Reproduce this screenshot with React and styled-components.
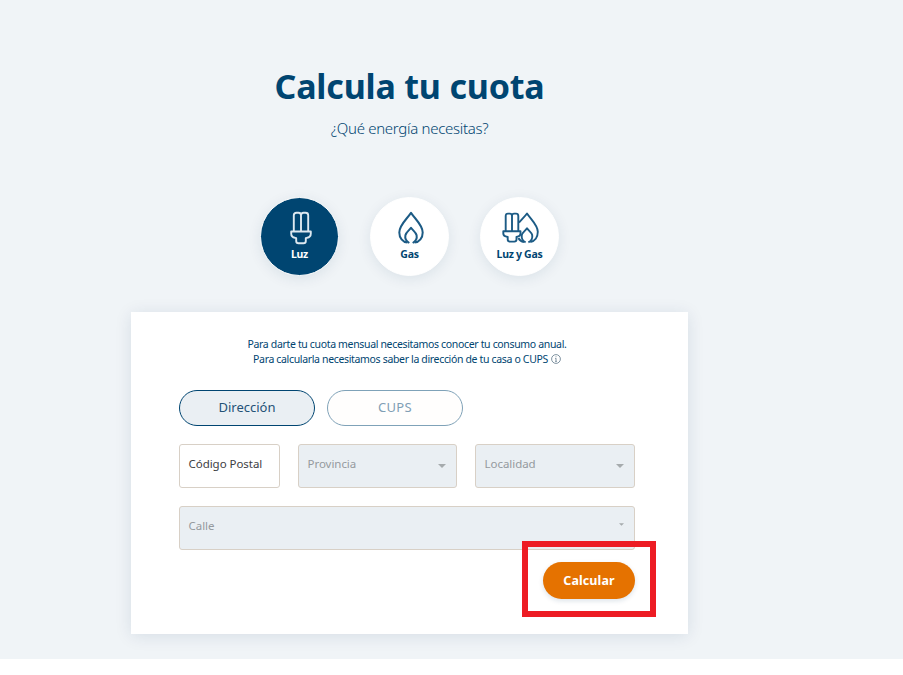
import React from "react";
import styled, { createGlobalStyle } from "styled-components";

const GlobalStyle = createGlobalStyle`
  * { box-sizing: border-box; }
  body { margin: 0; background: #fff; font-family: "Noto Sans", "Open Sans", sans-serif; color: #004571; }
  button, input { font-family: inherit; }
`;

const Page = styled.main`
  height: 659px;
  padding-top: 64px;
  background: #f0f4f7;
`;

const Calculator = styled.section`
  width: 558px;
  margin-left: 130.5px;
  display: flex;
  flex-direction: column;
  align-items: center;
`;

const Title = styled.h1`
  margin: 0;
  height: 45px;
  font-size: 34px;
  line-height: 45px;
  font-weight: 700;
  letter-spacing: -0.2px;
  white-space: nowrap;
`;

const Subtitle = styled.p`
  margin: 8px 0 0;
  height: 22px;
  font-size: 15px;
  line-height: 22px;
  font-weight: 300;
  letter-spacing: -0.3px;
  white-space: nowrap;
`;

const EnergyOptions = styled.div`
  display: flex;
  gap: 31px;
  margin-top: 58px;
`;

const EnergyOption = styled.button`
  width: 79px;
  height: 79px;
  padding: 13px 0 0;
  display: flex;
  flex-direction: column;
  align-items: center;
  border: 1px solid #fff;
  border-radius: 50%;
  background: ${(p) => (p.$active ? "#004571" : "#fff")};
  color: ${(p) => (p.$active ? "#fff" : "#004571")};
  box-shadow: 0 3px 14px rgba(0, 50, 90, 0.09);
  svg { display: block; flex: none; transform: translateX(1px); stroke: ${(p) => (p.$active ? "#dce8f0" : "#1c5b85")}; }
`;

const OptionLabel = styled.span`
  margin-top: 2px;
  font-size: 10.5px;
  line-height: 14px;
  font-weight: 700;
  white-space: nowrap;
  letter-spacing: -0.3px;
`;

const Card = styled.div`
  width: 557px;
  height: 322px;
  margin-top: 36px;
  padding: 25px 53px 0 48px;
  background: #fff;
  box-shadow: 0 2px 16px rgba(0, 50, 90, 0.11);
`;

const Explanation = styled.div`
  display: flex;
  flex-direction: column;
  align-items: center;
  width: 456px;
  height: 32px;
  font-size: 10.5px;
  line-height: 15px;
`;

const ExplanationLine = styled.span`
  display: flex;
  align-items: center;
  gap: 3px;
  height: 15px;
  white-space: nowrap;
  letter-spacing: -0.34px;
  svg { margin-top: -2px; }
`;

const Tabs = styled.div`
  display: flex;
  gap: 12px;
  margin-top: 21px;
`;

const Tab = styled.button`
  width: 136px;
  height: 36px;
  padding: 0 0 3px;
  border: 1px solid ${(p) => (p.$active ? "#004571" : "#7fa2b8")};
  border-radius: 18px;
  background: ${(p) => (p.$active ? "#eaeff3" : "#fffefd")};
  color: ${(p) => (p.$active ? "#245277" : "#7f9fb5")};
  font-size: 13px;
  letter-spacing: ${(p) => p.$spacing || "0"};
`;

const Fields = styled.div`
  display: grid;
  grid-template-columns: 101px 159px 160px;
  gap: 18px;
  margin-top: 18px;
`;

const Field = styled.button`
  grid-column: ${(p) => (p.$wide ? "1 / -1" : "auto")};
  height: 44px;
  padding: 0 10px 5px 8.5px;
  display: flex;
  align-items: center;
  justify-content: space-between;
  border: 1px solid #d8d0c6;
  border-radius: 3px;
  background: ${(p) => (p.$enabled ? "#fff" : "#eaeff3")};
  color: ${(p) => (p.$enabled ? "#3d4043" : "#959a9e")};
  font-size: 11.5px;
  white-space: nowrap;
  letter-spacing: -0.04px;
`;

const Caret = styled.svg`
  display: block;
  flex: none;
  fill: #a6abad;
  margin-top: ${(p) => (p.$small ? "-2px" : "4px")};
`;

const Actions = styled.div`
  position: relative;
  display: flex;
  justify-content: flex-end;
  margin-top: 12px;
`;

const Submit = styled.button`
  width: 92px;
  height: 37px;
  padding: 0;
  border: 0;
  border-radius: 19px;
  background: #e57200;
  color: #fff;
  font-size: 12.5px;
  font-weight: 700;
  letter-spacing: 0.1px;
  box-shadow: 0 2px 5px rgba(0, 60, 100, 0.14);
`;

const Highlight = styled.div`
  position: absolute;
  top: -21px;
  right: -21px;
  width: 134px;
  height: 76px;
  border: 6px solid #ed1c24;
  pointer-events: none;
`;

const BulbIcon = () => (
  <svg width="22" height="34" viewBox="0 0 22 34" fill="none" strokeWidth="1.9" strokeLinejoin="round">
    <path d="M3.8 20V4.2Q3.8 1.7 6.5 1.7H8.5Q11 1.7 11 4.2V20M11 4.2Q11 1.7 13.5 1.7H15.5Q18.2 1.7 18.2 4.2V20" />
    <path d="M1.2 20.5H20.8V22.5Q20.8 26.2 17 26.8L15.8 27.2V30Q15.8 32.3 13.5 32.3H8.5Q6.2 32.3 6.2 30V27.2L5 26.8Q1.2 26.2 1.2 22.5Z" />
  </svg>
);

const FlameIcon = () => (
  <svg width="28" height="34" viewBox="0 0 28 34" fill="none" strokeWidth="2" strokeLinejoin="round">
    <path d="M10.5 31.6C5.6 31 2.3 26.8 2.3 21.4C2.3 14.2 9.2 8.8 14 1.9C18.8 8.8 25.7 14.2 25.7 21.4C25.7 26.8 22.4 31 17.5 31.6" />
    <path d="M12.3 32C8.5 29.7 7.8 27.2 8.4 24.2C8.9 21.5 12 19.5 14 16.9C16 19.5 19.1 21.5 19.6 24.2C20.2 27.2 19.5 29.7 15.7 32" />
  </svg>
);

const DualIcon = () => (
  <svg width="38" height="34" viewBox="0 0 38 34" fill="none" strokeWidth="1.9" strokeLinejoin="round">
    <path d="M3.7 20V5Q3.7 2.6 6 2.6H7.8Q10 2.6 10 5V20M10 5Q10 2.6 12.2 2.6H14Q16.3 2.6 16.3 5V20" />
    <path d="M1.3 20.3H18.5V22.5Q18.5 25.2 15.5 25.6L14.5 26V28.5Q14.5 30.6 12.3 30.6H7.9Q5.7 30.6 5.7 28.5V26L4.5 25.6Q1.3 25.2 1.3 22.5Z" />
    <path d="M17 11.5C19.8 8.3 22.8 5.5 25 2.5C29.3 8.9 35.8 14 35.8 20.8C35.8 26.3 32.8 30.2 28.3 31M22 31Q18 30.2 16.4 27" />
    <path d="M23.6 31.3C19.8 29.4 19.3 26.9 19.8 24C20.3 21.5 23.2 19.8 25 17.3C26.8 19.8 29.7 21.5 30.2 24C30.7 26.9 30.2 29.4 26.4 31.3" />
  </svg>
);

const InfoIcon = () => (
  <svg width="10" height="10" viewBox="0 0 10 10" fill="none" stroke="#5f7789" strokeWidth="0.8">
    <circle cx="5" cy="5" r="4.4" />
    <path d="M5 4.2V7.5M5 2.3V3.2M4.2 4.4H5M4.2 7.4H5.8" />
  </svg>
);

const DropdownCaret = ({ small }) => (
  <Caret $small={small} width={small ? 5 : 8} height={small ? 3 : 4} viewBox="0 0 8 4">
    <path d="M0 0H8L4 4Z" />
  </Caret>
);

export default function App() {
  return (
    <>
      <GlobalStyle />
      <Page>
        <Calculator>
          <Title>Calcula tu cuota</Title>
          <Subtitle>¿Qué energía necesitas?</Subtitle>
          <EnergyOptions>
            <EnergyOption $active><BulbIcon /><OptionLabel>Luz</OptionLabel></EnergyOption>
            <EnergyOption><FlameIcon /><OptionLabel>Gas</OptionLabel></EnergyOption>
            <EnergyOption><DualIcon /><OptionLabel>Luz y Gas</OptionLabel></EnergyOption>
          </EnergyOptions>
          <Card>
            <Explanation>
              <ExplanationLine>Para darte tu cuota mensual necesitamos conocer tu consumo anual.</ExplanationLine>
              <ExplanationLine>Para calcularla necesitamos saber la dirección de tu casa o CUPS <InfoIcon /></ExplanationLine>
            </Explanation>
            <Tabs>
              <Tab $active>Dirección</Tab>
              <Tab $spacing="0.3px">CUPS</Tab>
            </Tabs>
            <Fields>
              <Field $enabled>Código Postal</Field>
              <Field>Provincia<DropdownCaret /></Field>
              <Field>Localidad<DropdownCaret /></Field>
              <Field $wide>Calle<DropdownCaret small /></Field>
            </Fields>
            <Actions>
              <Submit>Calcular</Submit>
              <Highlight />
            </Actions>
          </Card>
        </Calculator>
      </Page>
    </>
  );
}
